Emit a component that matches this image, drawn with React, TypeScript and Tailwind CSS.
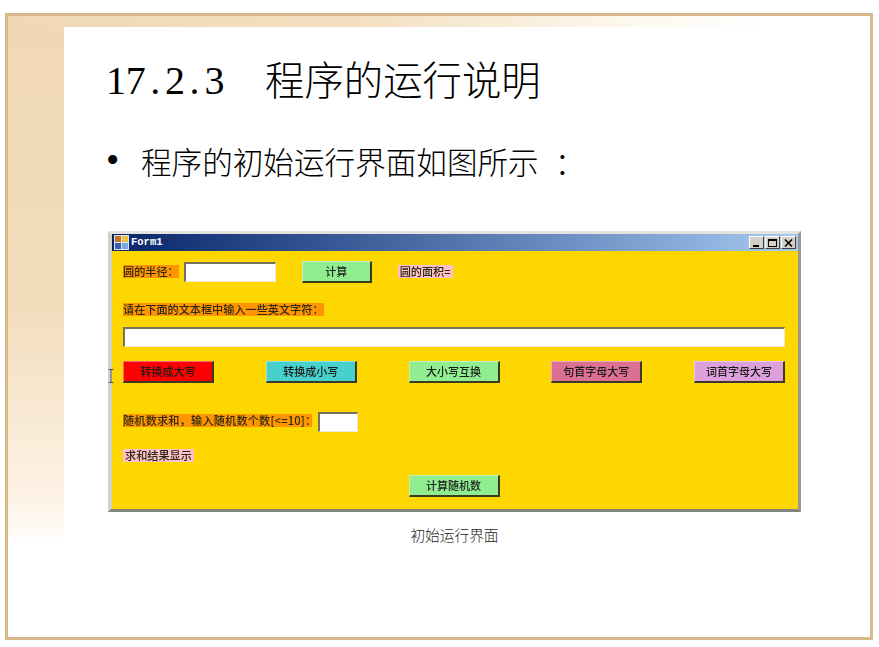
const cjk = "font-['Noto_Sans_CJK_SC','Liberation_Sans',sans-serif]";

function Label({ text, pink, className = "" }: { text: string; pink?: boolean; className?: string }) {
  return (
    <span className={`block h-[13px] text-[11.15px] leading-[13px] font-medium text-[#2a2a10] whitespace-nowrap ${pink ? "bg-[#ffc0cb] px-[2px]" : "bg-[#ff9500]"} ${className}`}>
      {text}
    </span>
  );
}

function FormButton({ text, color, width = "w-[91px]" }: { text: string; color: string; width?: string }) {
  return (
    <div className={`${width} ${color} h-[22px] flex items-center justify-center border-t border-l border-white/40 border-r-2 border-b-2 border-r-[#3a3a20] border-b-[#3a3a20] text-[11px] font-medium text-[#1c1c1c]`}>
      {text}
    </div>
  );
}

function TextBox({ width }: { width: string }) {
  return <div className={`${width} h-[20px] bg-white border-t-2 border-l-2 border-t-[#77715c] border-l-[#77715c] border-r border-b border-r-[#f0ead8] border-b-[#f0ead8]`} />;
}

function WinButton({ children }: { children: React.ReactNode }) {
  return (
    <div className="w-[15px] h-[13px] bg-[#d4d0c8] border-r border-b border-r-[#404040] border-b-[#404040] border-t border-l border-t-white border-l-white flex items-center justify-center">
      {children}
    </div>
  );
}

function Form1() {
  return (
    <div className={`${cjk} relative ml-[2px] w-[693px] h-[281px] bg-[#d4d0c8] border-t-[3px] border-l-[3px] border-r-[3px] border-b-[3px] border-t-[#e4e2dc] border-l-[#d4d0c8] border-r-[#9a9a94] border-b-[#85857f] flex flex-col`}>
      <div className="h-[17px] ml-[1px] flex items-center pl-[2px] pr-[2px] bg-gradient-to-r from-[#0a246a] to-[#a6caf0]">
        <svg width="15" height="15" viewBox="0 0 15 15" className="shrink-0">
          <rect x="0" y="0" width="15" height="15" fill="#dfe3ea" />
          <rect x="1" y="1" width="6" height="6" fill="#c8702a" />
          <rect x="8" y="1" width="6" height="6" fill="#f0c040" />
          <rect x="1" y="8" width="6" height="6" fill="#3a5fa8" />
          <rect x="8" y="8" width="6" height="6" fill="#7fa8dc" />
        </svg>
        <span className="ml-[2px] font-['Liberation_Mono',monospace] text-[10.5px] font-bold text-white leading-none">Form1</span>
        <div className="ml-auto flex items-center gap-[1px]">
          <WinButton>
            <span className="block w-[6px] h-[2px] bg-black mt-[6px] mr-[2px]" />
          </WinButton>
          <WinButton>
            <span className="block w-[9px] h-[8px] border border-black border-t-2" />
          </WinButton>
          <WinButton>
            <svg width="9" height="8" viewBox="0 0 9 8">
              <path d="M1 0.5 L8 7.5 M8 0.5 L1 7.5" stroke="#000" strokeWidth="1.6" />
            </svg>
          </WinButton>
        </div>
      </div>

      <div className="flex-1 ml-[1px] bg-[#ffd700] pl-[11px] pr-[13px] flex flex-col blur-[0.3px]">
        <div className="mt-[10px] flex items-center h-[21px]">
          <Label text="圆的半径：" />
          <div className="ml-[5px] mt-[1px]"><TextBox width="w-[92px]" /></div>
          <div className="ml-[26px]"><FormButton text="计算" color="bg-[#90ee90]" width="w-[70px]" /></div>
          <div className="ml-[26px]"><Label text="圆的面积=" pink /></div>
        </div>
        <div className="mt-[21px] flex">
          <Label text="请在下面的文本框中输入一些英文字符：" />
        </div>
        <div className="mt-[11px]">
          <TextBox width="w-full" />
        </div>
        <div className="mt-[14px] flex justify-between">
          <FormButton text="转换成大写" color="bg-[#ff0000]" />
          <FormButton text="转换成小写" color="bg-[#48d1cc]" />
          <FormButton text="大小写互换" color="bg-[#90ee90]" />
          <FormButton text="句首字母大写" color="bg-[#db7093]" />
          <FormButton text="词首字母大写" color="bg-[#dda0dd]" />
        </div>
        <div className="mt-[29px] flex items-start h-[20px]">
          <Label text="随机数求和，输入随机数个数[<=10]：" className="mt-[2px] w-[189px] tracking-[0.2px]" />
          <div className="ml-[6px]"><TextBox width="w-[40px]" /></div>
        </div>
        <div className="mt-[17px] flex">
          <Label text="求和结果显示" pink />
        </div>
        <div className="mt-[13px] flex justify-center">
          <FormButton text="计算随机数" color="bg-[#90ee90]" />
        </div>
      </div>

      <svg width="6" height="14" viewBox="0 0 6 14" className="absolute left-[-3px] top-[135px]">
        <path d="M0.5 0.5 H5.5 M3 0.5 V13.5 M0.5 13.5 H5.5" stroke="#555" strokeWidth="1" fill="none" />
      </svg>
    </div>
  );
}

export default function App() {
  return (
    <div className="w-[879px] h-[647px] bg-white overflow-hidden pt-[13px] pl-[5px]">
      <div className="w-[868px] h-[627px] border-[3px] border-[#d9b98a] flex flex-col">
        <div className="h-[11px] shrink-0 bg-[linear-gradient(to_right,#f0d8b4_0%,#f3dfc0_40%,#fdf8ee_72%,#ffffff_88%)]" />
        <div className="flex flex-1">
          <div className="w-[56px] bg-[linear-gradient(to_bottom,#f0d8b4_0%,#f2dcbb_45%,#fdf3e6_78%,#ffffff_85%)]" />
          <div className="flex-1 pl-[42px]">
            <h1 className="mt-[31px] h-[40px] flex items-center text-black whitespace-nowrap">
              <span className="w-[159px] pt-[5px] flex font-['Liberation_Serif',serif] text-[40px] font-normal">
                {"17.2.3".split("").map((c, i) => (
                  <span key={i} className="w-[19.7px] text-center">{c}</span>
                ))}
              </span>
              <span className={`${cjk} text-[39.4px] font-light`}>程序的运行说明</span>
            </h1>
            <div className="mt-[48px] h-[31px] flex items-center text-black whitespace-nowrap">
              <span className="w-[35px] mb-[3px] font-['Liberation_Serif',serif] text-[38px] leading-none">•</span>
              <span className={`${cjk} text-[30.6px] font-light`}>
                程序的初始运行界面如图所示<span className="ml-[16px]">：</span>
              </span>
            </div>
            <div className="mt-[54px]">
              <Form1 />
            </div>
            <div className={`${cjk} mt-[15px] ml-[2px] w-[693px] text-center text-[14.7px] leading-[15px] text-[#222] font-light`}>
              初始运行界面
            </div>
          </div>
        </div>
      </div>
    </div>
  );
}
